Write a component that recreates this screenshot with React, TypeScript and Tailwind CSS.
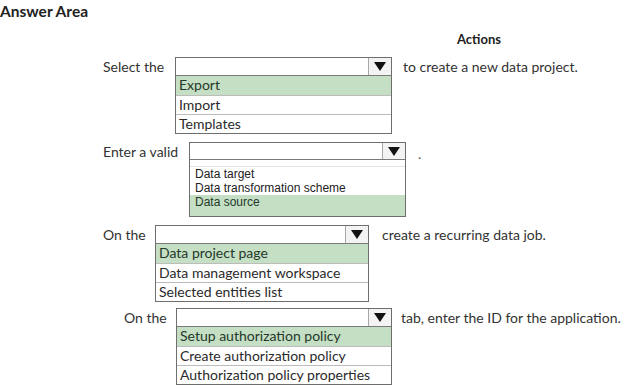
// Exam-style "Answer Area" with four dropdown prompts, each shown with its
// option list open and the correct answer shaded green.

type Option = { text: string; picked?: boolean };

type Row = {
  label: string;
  tail: string;
  padLeft: string;
  labelW: string;
  boxW: string;
  tailGap: string;
  top: string;
  options: Option[];
};

const rows: Row[] = [
  {
    label: "Select the",
    tail: "to create a new data project.",
    padLeft: "pl-[103px]",
    labelW: "w-[72px]",
    boxW: "w-[217px]",
    tailGap: "ml-[11px]",
    top: "mt-[11px]",
    options: [{ text: "Export", picked: true }, { text: "Import" }, { text: "Templates" }],
  },
  {
    label: "On the",
    tail: "create a recurring data job.",
    padLeft: "pl-[103px]",
    labelW: "w-[52px]",
    boxW: "w-[214px]",
    tailGap: "ml-[13px]",
    top: "mt-[8px]",
    options: [
      { text: "Data project page", picked: true },
      { text: "Data management workspace" },
      { text: "Selected entities list" },
    ],
  },
  {
    label: "On the",
    tail: "tab, enter the ID for the application.",
    padLeft: "pl-[124px]",
    labelW: "w-[52px]",
    boxW: "w-[216px]",
    tailGap: "ml-[9px]",
    top: "mt-[6px]",
    options: [
      { text: "Setup authorization policy", picked: true },
      { text: "Create authorization policy" },
      { text: "Authorization policy properties" },
    ],
  },
];

function Header({ h }: { h: string }) {
  return (
    <div className={`flex ${h} border-b border-[#7a7a7a] bg-white`}>
      <div className="flex-1" />
      <div className="flex w-[23px] items-center justify-center border-l border-[#a8a8a8] bg-[#f3f3f3]">
        <svg width="12" height="9" viewBox="0 0 12 9">
          <path d="M0 0 H12 L6 9 Z" fill="#111" />
        </svg>
      </div>
    </div>
  );
}

function Dropdown({ row }: { row: Row }) {
  return (
    <div className={`${row.boxW} border border-[#6e6e6e] bg-white`}>
      <Header h="h-[18px]" />
      {row.options.map((o, i) => (
        <div
          key={o.text}
          className={`h-[19px] pl-[3px] text-[14px] leading-[18px] ${
            i > 0 ? "border-t border-[#bcbcbc]" : ""
          } ${o.picked ? "bg-[#c4dfc4] text-[#25382a]" : "text-[#2a2a2a]"}`}
        >
          {o.text}
        </div>
      ))}
    </div>
  );
}

function PromptRow({ row }: { row: Row }) {
  return (
    <div className={`flex items-start ${row.padLeft} ${row.top}`}>
      <div className={`${row.labelW} shrink-0 pt-px text-[14px] leading-[18px] text-[#333]`}>
        {row.label}
      </div>
      <Dropdown row={row} />
      <div className={`${row.tailGap} pt-px text-[14px] leading-[18px] text-[#333]`}>{row.tail}</div>
    </div>
  );
}

export default function App() {
  const [first, third, fourth] = rows;

  return (
    <div className="h-[391px] w-[625px] overflow-hidden bg-white font-['Lato','Open_Sans',sans-serif]">
      <div className="pt-[2px] text-[15.5px] font-bold leading-[18px] text-[#222]">Answer Area</div>
      <div className="mt-[12px] pl-[457px] text-[13px] font-bold leading-[14px] text-[#222]">Actions</div>

      <PromptRow row={first} />

      {/* second prompt uses an Arial-style list with a blank first slot */}
      <div className="mt-[8px] flex items-start pl-[103px]">
        <div className="w-[86px] shrink-0 pt-px text-[14px] leading-[17px] text-[#333]">Enter a valid</div>
        <div className="w-[217px] border border-[#6e6e6e] bg-white">
          <Header h="h-[17px]" />
          <div className="h-[7px] border-b border-[#e2e2e2]" />
          <div className="font-['Liberation_Sans',Arial,sans-serif] text-[12px] leading-[14px] text-[#222]">
            <div className="pl-[5px]">Data target</div>
            <div className="pl-[5px]">Data transformation scheme</div>
            <div className="h-[21px] bg-[#c4dfc4] pl-[5px] text-[#25382a]">Data source</div>
          </div>
        </div>
        <div className="ml-[12px] pt-[3px] text-[14px] leading-[17px] text-[#555]">.</div>
      </div>

      <PromptRow row={third} />
      <PromptRow row={fourth} />
    </div>
  );
}
